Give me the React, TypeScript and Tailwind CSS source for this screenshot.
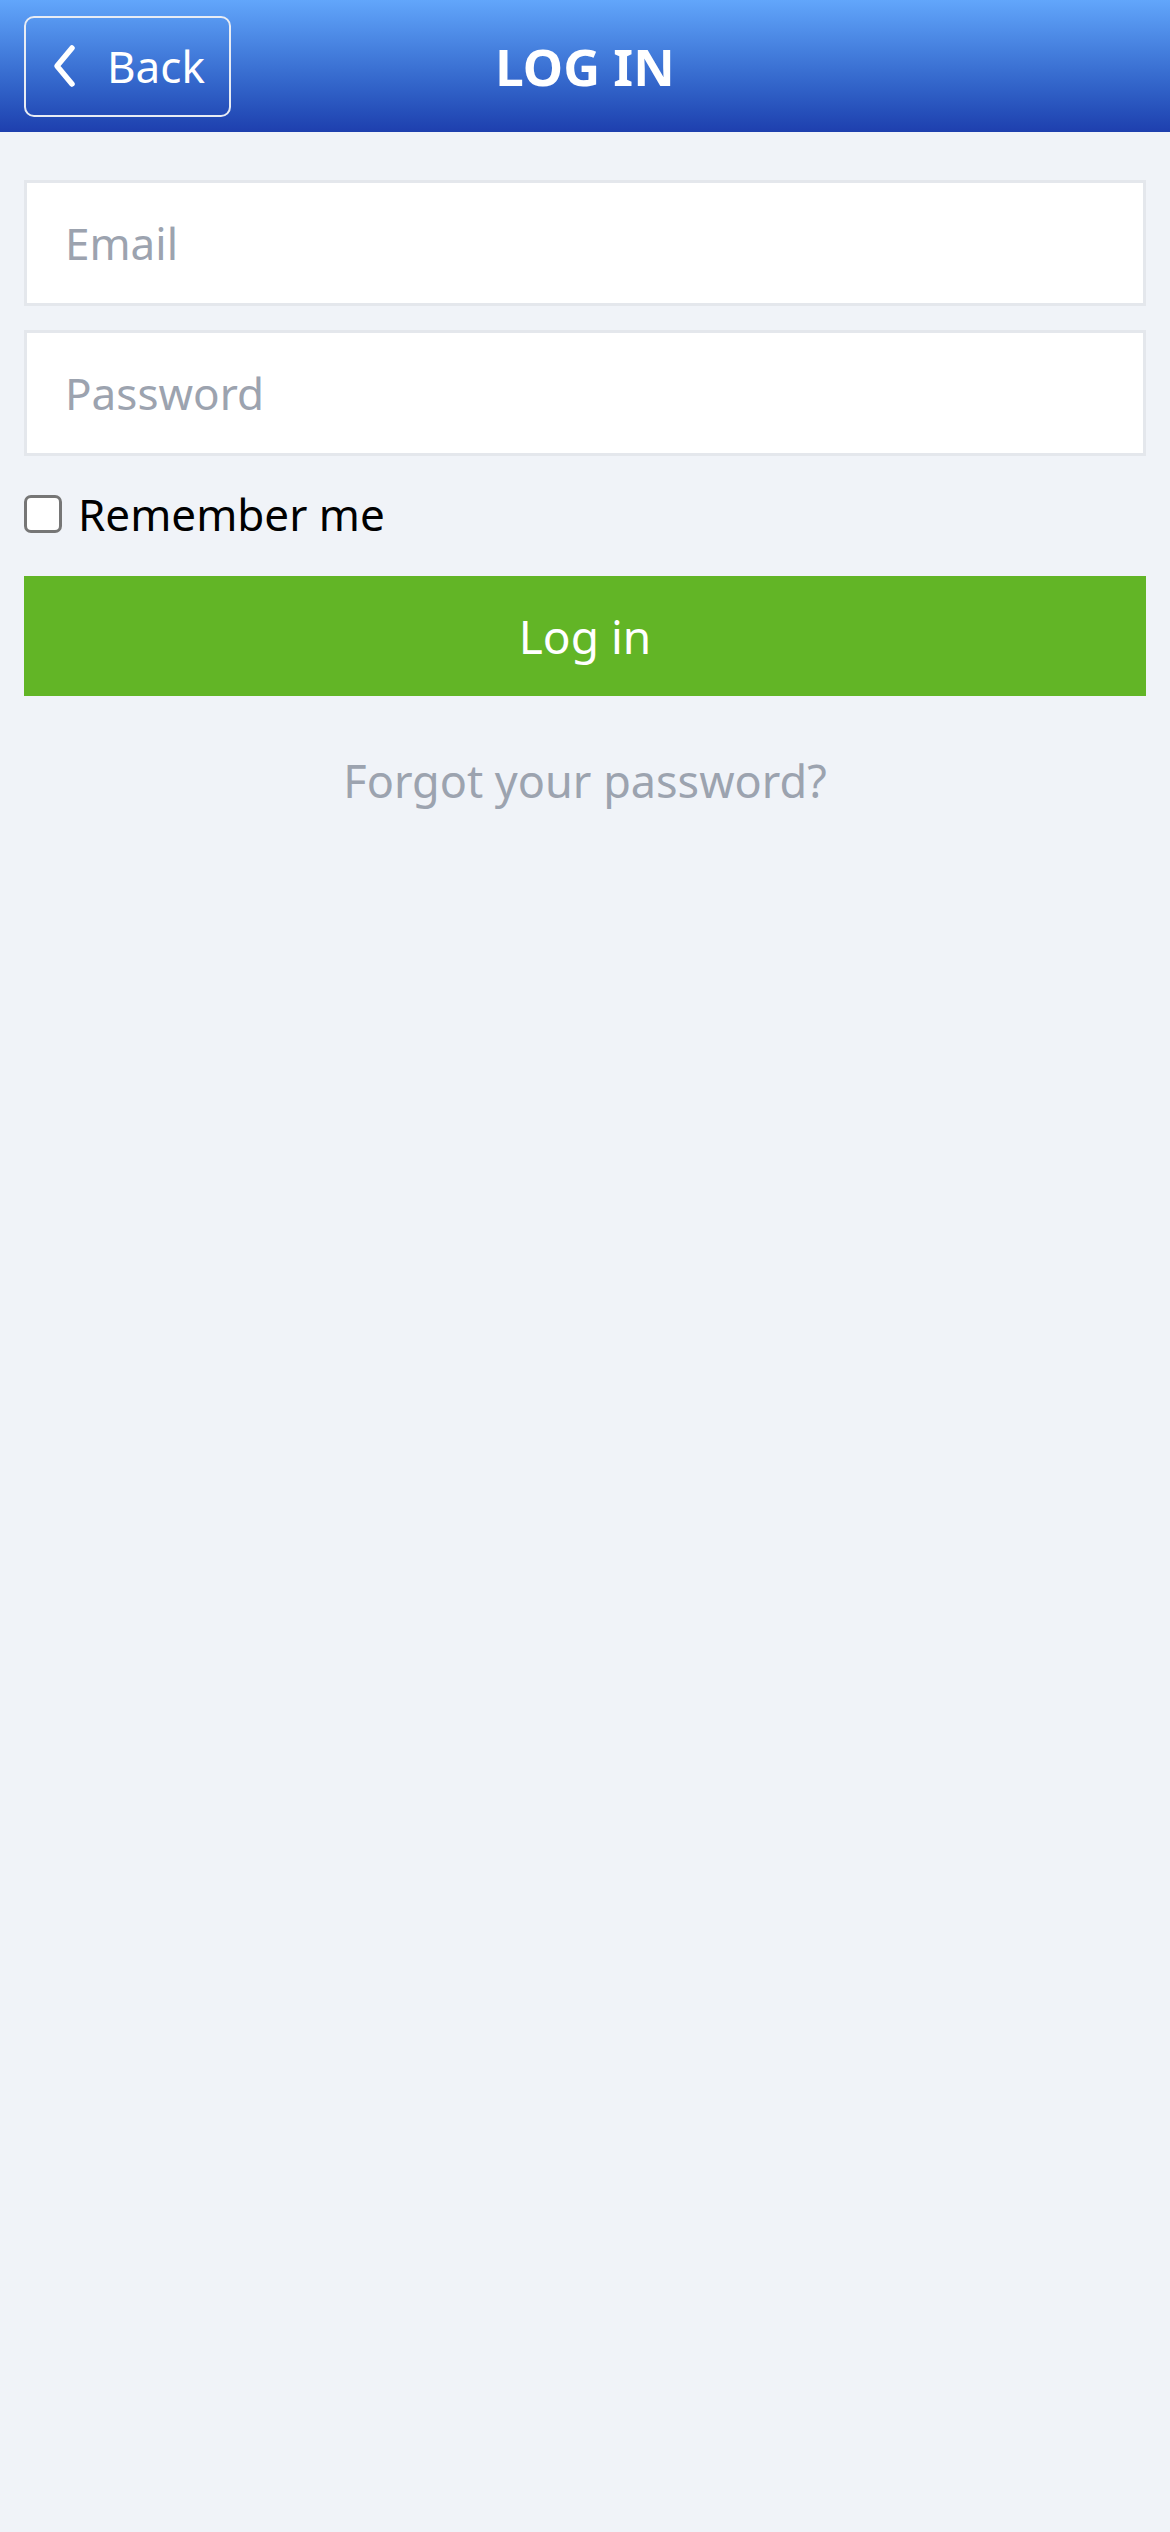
import { useState } from 'react'

export default function App() {
  const [remember, setRemember] = useState(false)

  return (
    <div className="min-h-[2532px] w-full bg-[#f0f3f8] font-['Noto_Sans',sans-serif]">
      {/* Header */}
      <header className="grid h-[132px] grid-cols-[1fr_auto_1fr] items-center bg-gradient-to-b from-[#62a6fb] to-[#1e3fae]">
        <div className="pl-[24px]">
          <button className="flex h-[101px] w-[207px] items-center rounded-[10px] border-2 border-[#e8ecf4] text-white">
            <svg className="ml-[25px] h-[44px] w-[26px]" viewBox="0 0 26 44" fill="none">
              <path d="M21 4 L6 22 L21 40" stroke="white" strokeWidth="5.5" strokeLinecap="round" strokeLinejoin="round" />
            </svg>
            <span className="ml-[30px] text-[44px] leading-none">Back</span>
          </button>
        </div>
        <h1 className="text-[51px] font-bold leading-none text-white">LOG IN</h1>
        <div />
      </header>

      {/* Form */}
      <main className="flex flex-col px-[24px] pt-[48px]">
        <input
          type="email"
          placeholder="Email"
          className="h-[126px] w-full border-[3px] border-[#e4e7ec] bg-white px-[38px] text-[44px] text-gray-800 outline-none placeholder:text-[#9ca3af]"
        />
        <input
          type="password"
          placeholder="Password"
          className="mt-[24px] h-[126px] w-full border-[3px] border-[#e4e7ec] bg-white px-[38px] text-[44px] text-gray-800 outline-none placeholder:text-[#9ca3af]"
        />

        <label className="mt-[28px] flex h-[60px] items-center">
          <input
            type="checkbox"
            checked={remember}
            onChange={(e) => setRemember(e.target.checked)}
            className="h-[38px] w-[38px] appearance-none rounded-[7px] border-[3px] border-[#767676] bg-white checked:bg-[#1e40af]"
          />
          <span className="ml-[16px] text-[44px] leading-none text-black">Remember me</span>
        </label>

        <button className="mt-[32px] h-[120px] w-full bg-[#62b526] text-[46px] text-white">Log in</button>

        <a className="mt-[52px] text-center text-[45px] leading-[66px] text-[#9ca3af]">Forgot your password?</a>
      </main>
    </div>
  )
}
